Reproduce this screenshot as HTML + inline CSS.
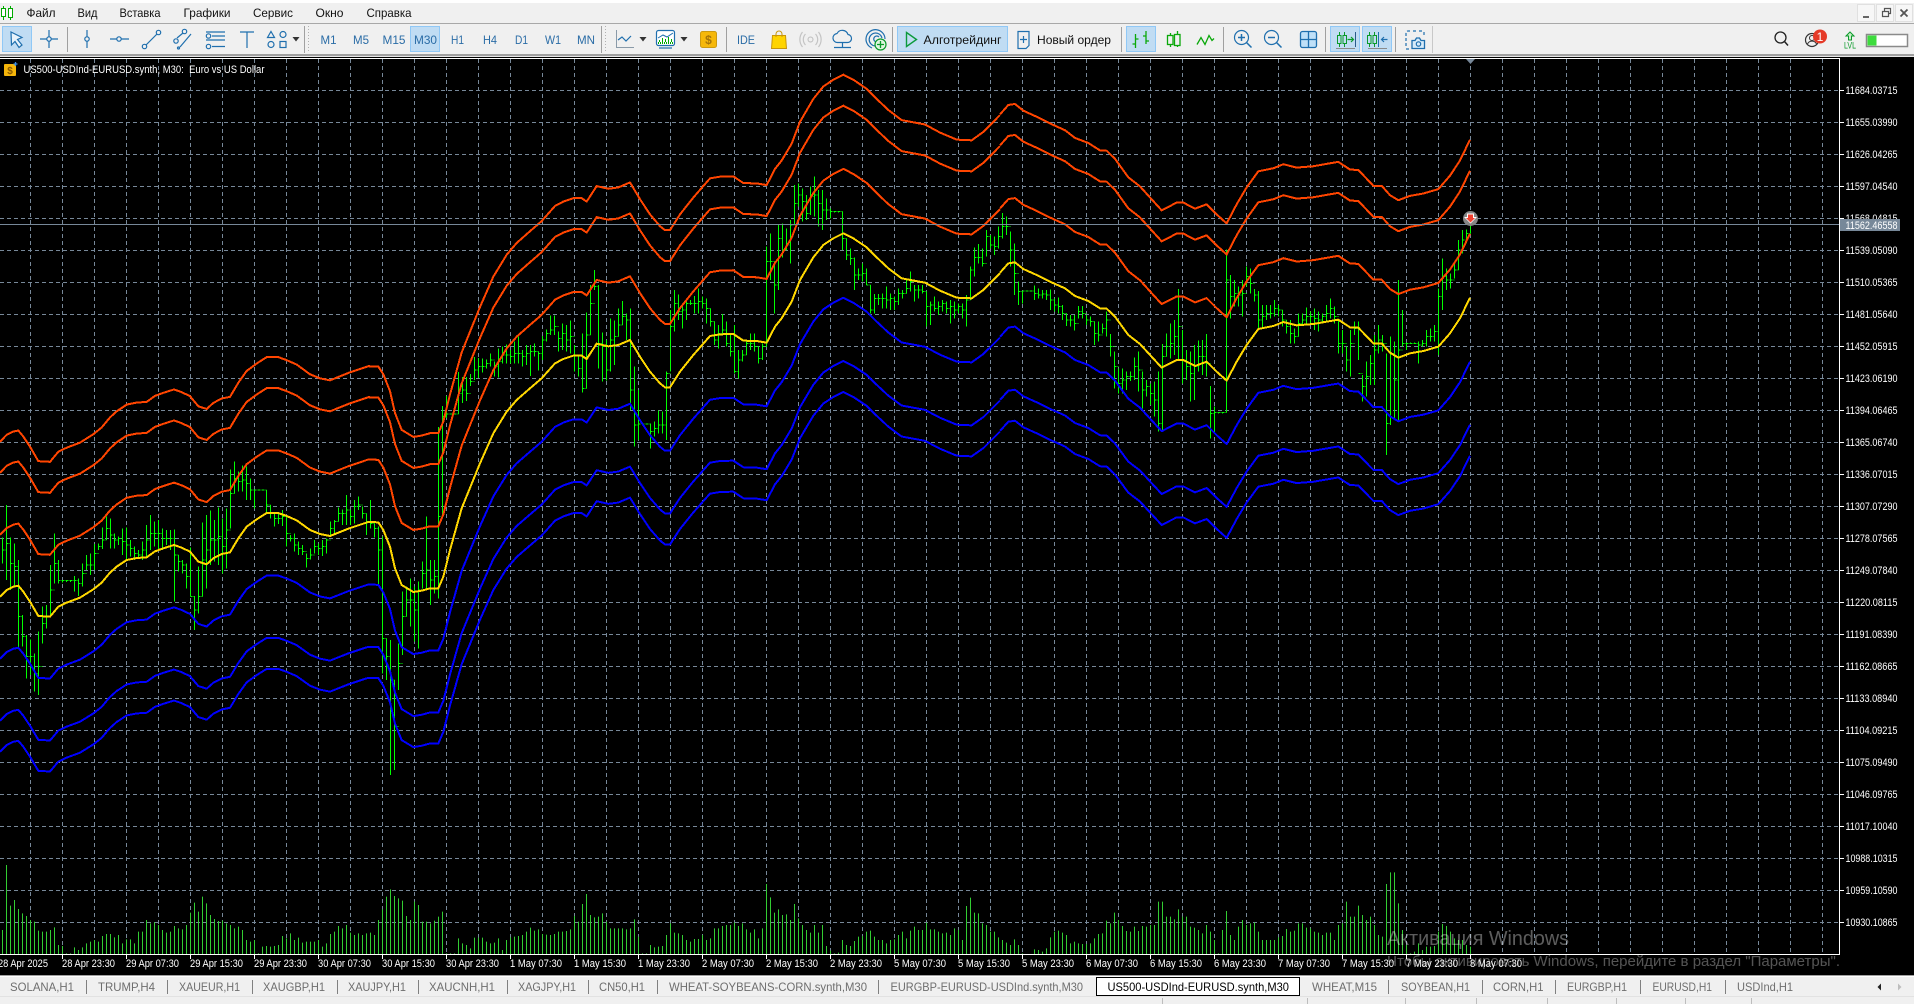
<!DOCTYPE html>
<html lang="ru"><head><meta charset="utf-8"><title>US500-USDInd-EURUSD.synth,M30</title>
<style>
html,body{margin:0;padding:0;width:1914px;height:1004px;overflow:hidden;background:#f0f0f0}
svg{display:block}
text{font-family:"Liberation Sans",Arial,sans-serif}
.m{font-size:12px;fill:#111}
.t{font-size:12px;fill:#2a6ca6}
.k{font-size:12px;fill:#111}
.p{font-size:11px;fill:#fff}
.d{font-size:11px;fill:#fff}
.b{font-size:12px;fill:#6e6e6e}
.i{fill:none;stroke:#1f6fae;stroke-width:1.2}
.g{fill:none;stroke:#0aa80a;stroke-width:1.3}
</style></head><body>
<svg width="1914" height="1004" viewBox="0 0 1914 1004" xmlns="http://www.w3.org/2000/svg">
<rect width="1914" height="1004" fill="#f0f0f0"/>
<rect width="1914" height="3" fill="#fff"/>
<rect y="23" width="1914" height="1" fill="#a8a8a8"/>
<!-- logo -->
<path d="M3.5 6V20M10.5 6V20" stroke="#0a0" fill="none"/>
<rect x="1.5" y="8.5" width="4" height="8" fill="#fff" stroke="#0a0"/>
<rect x="8.5" y="8.5" width="4" height="9" fill="#fff" stroke="#0a0"/>
<!-- menu -->
<g class="m">
<text class="m" x="26.5" y="17" textLength="29" lengthAdjust="spacingAndGlyphs">Файл</text>
<text class="m" x="77.5" y="17" textLength="20" lengthAdjust="spacingAndGlyphs">Вид</text>
<text class="m" x="119.5" y="17" textLength="41" lengthAdjust="spacingAndGlyphs">Вставка</text>
<text class="m" x="183.5" y="17" textLength="47" lengthAdjust="spacingAndGlyphs">Графики</text>
<text class="m" x="253" y="17" textLength="40" lengthAdjust="spacingAndGlyphs">Сервис</text>
<text class="m" x="315.5" y="17" textLength="28" lengthAdjust="spacingAndGlyphs">Окно</text>
<text class="m" x="366.5" y="17" textLength="45" lengthAdjust="spacingAndGlyphs">Справка</text>
</g>
<!-- window controls -->
<g fill="#f7f7f7" stroke="#e0e0e0"><rect x="1857.5" y="4.5" width="17" height="17"/><rect x="1876.5" y="4.5" width="17" height="17"/><rect x="1895.5" y="4.5" width="17" height="17"/></g>
<path d="M1863 17h6" stroke="#666" stroke-width="2"/>
<path d="M1882.5 11.5h6v5h-6zM1884.5 11v-2.500h6v5h-2" fill="none" stroke="#555" stroke-width="1.200"/>
<path d="M1900.500 9.500l7 7M1907.500 9.500l-7 7" stroke="#555" stroke-width="1.800"/>
<!-- toolbar buttons -->
<g fill="#c0dcf3" stroke="#90c8f6">
<rect x="2.500" y="26.500" width="29" height="25"/>
<rect x="410.500" y="26.500" width="29" height="25"/>
<rect x="897.500" y="26.500" width="110" height="25"/>
<rect x="1126.500" y="26.500" width="29" height="25"/>
<rect x="1330.500" y="26.500" width="29" height="25"/>
<rect x="1362.500" y="26.500" width="29" height="25"/>
</g>
<!-- separators -->
<path d="M67.500 27V52M304.500 26V53M601.500 26V53M726.500 27V52M892.500 27V52M1121.500 27V52M1223.500 27V52M1325.500 27V52M1395.500 27V52" stroke="#a0a0a0"/>
<path d="M1432.500 26V53" stroke="#c8c8c8"/>
<path d="M308.500 26V53M605.500 26V53" stroke="#b0b0b0" stroke-dasharray="1 2"/>
<rect y="54" width="1914" height="2" fill="#a0a0a0"/>
<rect y="56" width="1914" height="1" fill="#e8e8e8"/>
<!-- drawing tools -->
<path d="M11 32l11 5.500-4.500 2 4.500 5.500-3 2.500-4-6-3.500 3.500z" fill="#e8f3fb" stroke="#1f6fae" stroke-width="1.200"/>
<path class="i" d="M40 39h7M51 39h7M49 30v7M49 41v7"/><circle class="i" cx="49" cy="39" r="2.200"/>
<path class="i" d="M87 30v7M87 41v7"/><circle class="i" cx="87" cy="39" r="2.200"/>
<path class="i" d="M110 39h7M121 39h8"/><circle class="i" cx="119" cy="39" r="2.200"/>
<path class="i" d="M146 45l11-11"/><circle class="i" cx="144.500" cy="46.500" r="2.200"/><circle class="i" cx="158.500" cy="32.500" r="2.200"/>
<path class="i" d="M177 38l6-5M180 47l11-13"/><circle class="i" cx="176" cy="41" r="2.200"/><circle class="i" cx="184.500" cy="31.500" r="2.200"/><circle class="i" cx="178.500" cy="48" r="1"/>
<path class="i" d="M206 32h19M212 36h13M206 40h19M212 46.500h13"/><circle class="i" cx="208.500" cy="36" r="2.200"/><circle class="i" cx="208.500" cy="46.500" r="2.200"/>
<path class="i" d="M240 32h14M247 32v16"/>
<path class="i" d="M271 31.500l3.500 6h-7z"/><circle class="i" cx="283" cy="34.500" r="3"/><circle class="i" cx="271" cy="44.500" r="3"/><rect class="i" x="280" y="41.500" width="6" height="6"/>
<path d="M292.500 37h7l-3.500 4.500z" fill="#333"/>
<!-- timeframes -->
<g>
<text class="t" x="320.500" y="44" textLength="16" lengthAdjust="spacingAndGlyphs">M1</text>
<text class="t" x="353" y="44" textLength="16" lengthAdjust="spacingAndGlyphs">M5</text>
<text class="t" x="382.500" y="44" textLength="23" lengthAdjust="spacingAndGlyphs">M15</text>
<text class="t" x="414" y="44" textLength="23" lengthAdjust="spacingAndGlyphs">M30</text>
<text class="t" x="451" y="44" textLength="13" lengthAdjust="spacingAndGlyphs">H1</text>
<text class="t" x="483" y="44" textLength="14" lengthAdjust="spacingAndGlyphs">H4</text>
<text class="t" x="515" y="44" textLength="13" lengthAdjust="spacingAndGlyphs">D1</text>
<text class="t" x="545" y="44" textLength="16" lengthAdjust="spacingAndGlyphs">W1</text>
<text class="t" x="577" y="44" textLength="18" lengthAdjust="spacingAndGlyphs">MN</text>
</g>
<!-- chart types -->
<path d="M616.500 30V47.500H634" fill="none" stroke="#8a9aa8"/><path class="i" d="M618 40l4-3 4 4 5-5"/>
<path d="M639.500 37h7l-3.500 4.500z" fill="#333"/>
<rect class="i" x="656.500" y="30.500" width="18" height="15" rx="2" fill="#fff" style="fill:#fff"/>
<path d="M658 43h15" stroke="#0a0" stroke-dasharray="1 1" stroke-width="2"/><path d="M659.500 42v-2M662.500 42v-4M665.500 42v-3M668.500 42v-5M671.500 42v-3" stroke="#0a0"/>
<path d="M658 38l5-3 4 2 6-4" fill="none" stroke="#1f6fae"/><path class="i" d="M659 48h13"/>
<path d="M680.500 37h7l-3.500 4.500z" fill="#333"/>
<rect x="700.500" y="31.500" width="16" height="16" rx="2" fill="#f6b80a" stroke="#cc9a10"/>
<text x="708.500" y="44" text-anchor="middle" font-size="12" font-weight="bold" fill="#a5740a">$</text>
<text class="t" x="737" y="44" textLength="18" lengthAdjust="spacingAndGlyphs">IDE</text>
<path d="M772.500 35.500h13l1 13h-15z" fill="#ffd400" stroke="#c8960a"/><path d="M776 37v-3a3 3 0 0 1 6 0v3" fill="none" stroke="#c8960a"/>
<circle cx="810.500" cy="39.500" r="2.500" fill="none" stroke="#bdbdbd"/>
<path d="M805.500 34a8 8 0 0 0 0 11M802.500 32a12 12 0 0 0 0 15M815.500 34a8 8 0 0 1 0 11M818.500 32a12 12 0 0 1 0 15" fill="none" stroke="#c4c4c4" stroke-width="1.200"/>
<path class="i" d="M838 42.500h9a4 4 0 0 0 1-8 6 6 0 0 0-11-1 4.500 4.500 0 0 0 1 9zM842.500 42.500V47M834 47.500h17"/>
<path class="i" d="M872 48a9.500 9.500 0 1 1 13-9M875 46a6.500 6.500 0 1 1 7-8M877 42a3 3 0 1 1 2-5"/>
<circle cx="880.500" cy="44.500" r="5.500" fill="#dff5df" stroke="#0a9a2a" stroke-width="1.200"/><path d="M880.500 41v7M877 44.500h7" stroke="#0a9a2a" stroke-width="1.300"/>
<!-- Algo / order -->
<path d="M906.500 32.500l10 7-10 7z" fill="none" stroke="#0c9a3c" stroke-width="1.400"/>
<text class="k" x="923.500" y="44" textLength="78" lengthAdjust="spacingAndGlyphs">Алготрейдинг</text>
<path class="i" d="M1018 31.500h11v14l-3 3h-8zM1020 48.500h6" /><path d="M1023.500 36v7M1020 39.500h7" stroke="#1f6fae" stroke-width="1.200"/>
<text class="k" x="1037" y="44" textLength="74" lengthAdjust="spacingAndGlyphs">Новый ордер</text>
<!-- chart icons -->
<path class="g" d="M1135.500 34v14M1132.500 44h3M1135.500 39h3M1146 31v13M1143 36h3M1146 41h3"/>
<path class="g" d="M1170.500 33v14M1177.500 31v16"/><rect class="g" x="1167.500" y="35.500" width="5.500" height="9" fill="#f0f0f0" style="fill:#f0f0f0"/><rect class="g" x="1174.500" y="34.500" width="5.500" height="11" fill="#f0f0f0" style="fill:#f0f0f0"/>
<path class="g" d="M1197 44.500l4-7 4 7 4-9 3 5 2-2"/>
<circle class="i" cx="1241.500" cy="37.500" r="7"/><path class="i" d="M1246.500 42.500l5 5M1241.500 34v7M1238 37.500h7" style="stroke-width:1.500"/>
<circle class="i" cx="1271.500" cy="37.500" r="7"/><path class="i" d="M1276.500 42.500l5 5M1268 37.500h7" style="stroke-width:1.500"/>
<rect x="1300.500" y="31.500" width="16" height="16" rx="2" fill="#bfe0f8" stroke="#1f6fae" stroke-width="1.300"/><path d="M1308.500 31v16M1300 39.500h16" stroke="#1f6fae" stroke-width="1.300"/>
<path d="M1336 48.500h19M1368 48.500h19" stroke="#8a8a8a" stroke-width="1"/>
<path d="M1339.500 32v15M1344.500 32v15M1369.500 32v15M1374.500 32v15" stroke="#0a9a2a"/>
<rect x="1337.500" y="35.500" width="3.500" height="8" fill="#c0dcf3" stroke="#0a9a2a"/><rect x="1343" y="35.500" width="3.500" height="8" fill="#c0dcf3" stroke="#0a9a2a"/>
<rect x="1367.500" y="35.500" width="3.500" height="8" fill="#c0dcf3" stroke="#0a9a2a"/><rect x="1373" y="35.500" width="3.500" height="8" fill="#c0dcf3" stroke="#0a9a2a"/>
<path d="M1347.500 39.500h6M1351 37l2.500 2.500-2.500 2.500" fill="none" stroke="#0a9a2a" stroke-width="1.200"/>
<path d="M1355.500 32v15" stroke="#2a5a8a"/><path d="M1378.500 32v15" stroke="#1f6fae"/>
<path d="M1381.500 39.500h6M1384 37l-2.500 2.500 2.500 2.500" fill="none" stroke="#1f6fae" stroke-width="1.200"/>
<path class="i" d="M1410 31h-2a2 2 0 0 0-2 2v14M1413 31h3M1419 31h3M1424 32v3M1406 49h3" stroke-dasharray="3 2"/>
<path d="M1412 40.500h3l1.500-2.500h3l1.500 2.500h3.500v8h-12.500z" fill="#d7ebf9" stroke="#1f6fae" stroke-width="1.300"/><circle class="i" cx="1418.500" cy="44" r="2.200"/>
<!-- right of toolbar -->
<circle cx="1780.500" cy="37.500" r="5.500" fill="none" stroke="#222" stroke-width="1.300"/><path d="M1784.500 41.500l3.500 4" stroke="#222" stroke-width="1.500"/>
<circle cx="1812" cy="40" r="6.500" fill="#f0f0f0" stroke="#333" stroke-width="1.200"/><circle cx="1812" cy="38" r="2.500" fill="none" stroke="#333"/><path d="M1807.500 44a5 5 0 0 1 9 0" fill="none" stroke="#333"/>
<circle cx="1820" cy="36.500" r="7" fill="#e53a28"/><text x="1820" y="41" text-anchor="middle" font-size="12" fill="#fff">1</text>
<path d="M1850 32l4 4h-2.500v4h-3v-4H1846z" fill="#c8f0c8" stroke="#0a9a2a"/>
<text x="1844" y="48.500" font-size="9" fill="#0a9a2a" textLength="12" lengthAdjust="spacingAndGlyphs">LVL</text>
<rect x="1866.500" y="34.500" width="41" height="12" fill="#fff" stroke="#8a8a8a" stroke-width="1.500"/><rect x="1867.500" y="35.500" width="9" height="10" fill="#3ddc3d"/>
<!-- chart -->
<rect y="57" width="1914" height="919" fill="#000"/>
<!-- grid -->
<path fill="none" stroke="#778899" stroke-dasharray="4 3" d="M0 90.500H1839M0 122.500H1839M0 154.500H1839M0 186.500H1839M0 218.500H1839M0 250.500H1839M0 282.500H1839M0 314.500H1839M0 346.500H1839M0 378.500H1839M0 410.500H1839M0 442.500H1839M0 474.500H1839M0 506.500H1839M0 538.500H1839M0 570.500H1839M0 602.500H1839M0 634.500H1839M0 666.500H1839M0 698.500H1839M0 730.500H1839M0 762.500H1839M0 794.500H1839M0 826.500H1839M0 858.500H1839M0 890.500H1839M0 922.500H1839"/>
<path fill="none" stroke="#778899" stroke-dasharray="4 3" d="M30.500 59V954M62.500 59V954M94.500 59V954M126.500 59V954M158.500 59V954M190.500 59V954M222.500 59V954M254.500 59V954M286.500 59V954M318.500 59V954M350.500 59V954M382.500 59V954M414.500 59V954M446.500 59V954M478.500 59V954M510.500 59V954M542.500 59V954M574.500 59V954M606.500 59V954M638.500 59V954M670.500 59V954M702.500 59V954M734.500 59V954M766.500 59V954M798.500 59V954M830.500 59V954M862.500 59V954M894.500 59V954M926.500 59V954M958.500 59V954M990.500 59V954M1022.500 59V954M1054.500 59V954M1086.500 59V954M1118.500 59V954M1150.500 59V954M1182.500 59V954M1214.500 59V954M1246.500 59V954M1278.500 59V954M1310.500 59V954M1342.500 59V954M1374.500 59V954M1406.500 59V954M1438.500 59V954M1470.500 59V954M1502.500 59V954M1534.500 59V954M1566.500 59V954M1598.500 59V954M1630.500 59V954M1662.500 59V954M1694.500 59V954M1726.500 59V954M1758.500 59V954M1790.500 59V954M1822.500 59V954"/>
<!-- volumes -->
<g transform="translate(.5 860) scale(1 .33333)"><path fill="none" stroke="#32cd32" shape-rendering="crispEdges" d="M2 210V282M6 15V282M10 137V282M14 120V282M18 147V282M22 160V282M26 168V282M30 180V282M34 185V282M38 212V282M42 215V282M46 215V282M50 210V282M54 202V282M58 255V282M62 258V282M66 280V282M70 280V282M74 262V282M78 270V282M82 262V282M86 250V282M90 245V282M94 240V282M98 245V282M102 228V282M106 222V282M110 222V282M114 232V282M118 225V282M122 250V282M126 238V282M130 238V282M134 250V282M138 215V282M142 215V282M146 180V282M150 190V282M154 187V282M158 195V282M162 210V282M166 218V282M170 215V282M174 198V282M178 205V282M182 208V282M186 195V282M190 158V282M194 128V282M198 155V282M202 110V282M206 130V282M210 165V282M214 177V282M218 183V282M222 182V282M226 190V282M230 195V282M234 205V282M238 200V282M242 210V282M246 240V282M250 245V282M254 240V282M258 280V282M262 260V282M266 258V282M270 260V282M274 258V282M278 255V282M282 228V282M286 235V282M290 220V282M294 240V282M298 233V282M302 248V282M306 245V282M310 245V282M314 245V282M318 240V282M322 260V282M326 250V282M330 222V282M334 215V282M338 198V282M342 205V282M346 195V282M350 218V282M354 225V282M358 220V282M362 225V282M366 220V282M370 218V282M374 225V282M378 180V282M382 148V282M386 110V282M390 88V282M394 108V282M398 115V282M402 122V282M406 168V282M410 180V282M414 125V282M418 135V282M422 185V282M426 185V282M430 190V282M434 182V282M438 170V282M442 155V282M446 280V282M450 280V282M454 280V282M458 235V282M462 250V282M466 255V282M470 265V282M474 233V282M478 233V282M482 233V282M486 245V282M490 250V282M494 248V282M498 235V282M502 270V282M506 240V282M510 232V282M514 230V282M518 228V282M522 225V282M526 215V282M530 203V282M534 212V282M538 208V282M542 222V282M546 224V282M550 225V282M554 222V282M558 215V282M562 215V282M566 213V282M570 208V282M574 168V282M578 185V282M582 132V282M586 102V282M590 165V282M594 172V282M598 170V282M602 160V282M606 185V282M610 205V282M614 205V282M618 205V282M622 205V282M626 208V282M630 205V282M634 178V282M638 230V282M642 280V282M646 280V282M650 255V282M654 262V282M658 260V282M662 258V282M666 225V282M670 190V282M674 218V282M678 220V282M682 225V282M686 240V282M690 245V282M694 237V282M698 237V282M702 225V282M706 240V282M710 235V282M714 205V282M718 205V282M722 198V282M726 195V282M730 195V282M734 188V282M738 198V282M742 190V282M746 208V282M750 218V282M754 208V282M758 235V282M762 205V282M766 72V282M770 112V282M774 158V282M778 148V282M782 165V282M786 163V282M790 180V282M794 132V282M798 175V282M802 195V282M806 210V282M810 218V282M814 195V282M818 218V282M822 195V282M826 258V282M830 272V282M834 280V282M838 278V282M842 240V282M846 255V282M850 258V282M854 243V282M858 230V282M862 228V282M866 215V282M870 212V282M874 230V282M878 240V282M882 240V282M886 250V282M890 240V282M894 238V282M898 225V282M902 215V282M906 235V282M910 212V282M914 200V282M918 210V282M922 210V282M926 188V282M930 208V282M934 208V282M938 215V282M942 220V282M946 218V282M950 225V282M954 205V282M958 210V282M962 240V282M966 138V282M970 113V282M974 158V282M978 160V282M982 190V282M986 195V282M990 215V282M994 215V282M998 232V282M1002 240V282M1006 248V282M1010 255V282M1014 238V282M1018 255V282M1022 280V282M1026 282V282M1030 282V282M1034 268V282M1038 270V282M1042 275V282M1046 265V282M1050 232V282M1054 215V282M1058 212V282M1062 218V282M1066 225V282M1070 250V282M1074 245V282M1078 250V282M1082 252V282M1086 252V282M1090 250V282M1094 235V282M1098 222V282M1102 220V282M1106 182V282M1110 190V282M1114 158V282M1118 180V282M1122 198V282M1126 213V282M1130 215V282M1134 200V282M1138 213V282M1142 198V282M1146 200V282M1150 195V282M1154 195V282M1158 125V282M1162 125V282M1166 170V282M1170 170V282M1174 178V282M1178 148V282M1182 170V282M1186 170V282M1190 200V282M1194 203V282M1198 210V282M1202 220V282M1206 195V282M1210 215V282M1214 240V282M1218 280V282M1222 210V282M1226 153V282M1230 225V282M1234 240V282M1238 200V282M1242 180V282M1246 195V282M1250 190V282M1254 188V282M1258 215V282M1262 240V282M1266 240V282M1270 240V282M1274 240V282M1278 232V282M1282 228V282M1286 207V282M1290 215V282M1294 212V282M1298 190V282M1302 190V282M1306 203V282M1310 205V282M1314 215V282M1318 218V282M1322 225V282M1326 218V282M1330 218V282M1334 240V282M1338 195V282M1342 190V282M1346 125V282M1350 170V282M1354 170V282M1358 137V282M1362 165V282M1366 180V282M1370 170V282M1374 195V282M1378 225V282M1382 230V282M1386 72V282M1390 37V282M1394 37V282M1398 130V282M1402 210V282M1406 255V282M1410 280V282M1414 275V282M1418 250V282M1422 270V282M1426 260V282M1430 260V282M1434 258V282M1438 215V282M1442 192V282M1446 198V282M1450 215V282M1454 235V282M1458 240V282M1462 240V282M1466 255V282M1470 260V282"/></g>
<!-- price bars -->
<g fill="none" stroke="#00ff00" stroke-width="3" shape-rendering="crispEdges">
<g transform="translate(.5 450) scale(.33333)">
<path d="M6 262V340M18 165V390M30 262V420M42 280V410M54 330V595M66 495V590M78 555V685M90 568V675M102 610V725M114 545V735M126 470V580M138 465V535M150 345V500M162 250V400M174 330V400M186 390V398M198 390V396M210 390V396M222 378V425M234 385V438M246 340V410M258 315V360M270 310V375M282 282V360M294 280V300M306 232V297M318 200V270M330 205V295M342 250V295M354 260V285M366 235V315M378 232V330M390 270V320M402 290V330M414 300V325M426 275V330M438 225V325M450 195V300M462 215V290M474 210V300M486 235V300M498 240V285M510 240V300M522 238V455M534 315V365M546 330V370M558 340V415M570 292V440M582 438V540M594 350V490M606 218V440M618 195V415M630 182V345M642 210V335M654 172V345M666 205V370M678 175V355M690 58V235M702 35V130M714 65V125M726 47V125M738 50V150M750 85V150M762 120V175M774 118V122M786 118V122M798 120V188M810 165V205M822 190V230M834 190V222M846 180V228M858 195V290M870 255V275M882 250V305M894 275V315M906 285V315M918 310V352M930 295V328M942 270V310M954 280V315M966 270V318M978 265V310M990 215V260M1002 210V255M1014 172V215M1026 178V225M1038 135V225M1050 180V225M1062 150V220M1074 140V180M1086 170V205M1098 190V255M1110 150V235M1122 220V262M1134 230V405M1146 260V670M1158 565V690M1170 570V975M1182 690V960M1194 580V720M1206 425V615M1218 410V500M1230 385V530M1242 410V575M1254 395V595M1266 335V415M1278 200V420M1290 330V465M1302 330V430M1314 -69V445M1326 -132V200M1338 -162V-96M1350 -110V-106M1362 -110V-106M1374 -234V-108M1386 -219V-141M1398 -219V-147M1410 -228V-192M1422 -279V-210M1434 -276V-216"/>
<path stroke-dasharray="6 3 3" d="M6 300h12M18 280h12M30 340h12M42 350h12M54 500h12M66 560h12M78 620h12M90 620h12M102 670h12M114 650h12M126 520h12M138 500h12M150 420h12M162 340h12M174 392h12M186 392h12M198 392h12M210 392h12M222 392h12M234 400h12M246 370h12M258 345h12M270 345h12M282 310h12M294 290h12M306 270h12M318 235h12M330 255h12M342 270h12M354 265h12M366 275h12M378 285h12M390 295h12M402 310h12M414 315h12M426 300h12M438 270h12M450 250h12M462 250h12M474 250h12M486 265h12M498 265h12M510 265h12M522 315h12M534 335h12M546 345h12M558 380h12M570 440h12M582 480h12M594 440h12M606 330h12M618 300h12M630 270h12M642 270h12M654 260h12M666 290h12M678 240h12M690 130h12M702 85h12M714 95h12M726 90h12M738 100h12M750 120h12M762 120h12M774 120h12M786 120h12M798 165h12M810 190h12M822 205h12M834 205h12M846 200h12M858 250h12M870 265h12M882 285h12M894 295h12M906 305h12M918 325h12M930 315h12M942 290h12M954 295h12M966 290h12M978 270h12M990 235h12M1002 215h12M1014 190h12M1026 190h12M1038 180h12M1050 200h12M1062 170h12M1074 165h12M1086 190h12M1098 215h12M1110 220h12M1122 235h12M1134 300h12M1146 565h12M1158 620h12M1170 690h12M1182 830h12M1194 640h12M1206 500h12M1218 450h12M1230 450h12M1242 480h12M1254 420h12M1266 370h12M1278 360h12M1290 390h12M1302 380h12M1314 200h12M1326 -100h12M1338 -108h12M1350 -108h12M1362 -108h12M1374 -170h12M1386 -180h12M1398 -170h12M1410 -205h12M1422 -240h12M1434 -250h12"/>
</g>
<g transform="translate(480.500 170) scale(.33333)">
<path d="M6 565V608M18 568V595M30 550V590M42 575V620M54 535V622M66 530V580M78 523V580M90 540V580M102 515V580M114 500V580M126 540V590M138 525V585M150 525V618M162 520V560M174 545V602M186 498V570M198 478V515M210 437V495M222 437V495M234 485V545M246 460V540M258 465V545M270 452V550M282 525V605M294 555V620M306 490V668M318 428V655M330 345V495M342 300V360M354 345V595M366 487V635M378 510V632M390 445V605M402 452V585M414 415V500M426 393V465M438 430V510M450 415V720M462 590V830M474 660V810M486 760V764M498 760V764M510 760V835M522 755V800M534 722V790M546 725V790M558 605V810M570 420V605M582 360V485M594 373V450M606 408V475M618 395V450M630 390V405M642 378V430M654 355V430M666 380V415M678 385V460M690 415V470M702 455V525M714 465V535M726 432V495M738 455V530M750 490V560M762 465V610M774 540V625M786 540V575M798 510V555M810 490V540M822 490V545M834 530V580M846 520V570M858 230V530M870 190V330M882 275V430M894 165V360M906 160V262M918 175V240M930 150V280M942 45V165M954 40V110M966 55V155M978 75V150M990 50V135M1002 20V140M1014 60V170M1026 60V180M1038 85V150M1050 115V145M1062 123V127M1074 123V127M1086 125V240M1098 205V270M1110 235V285M1122 262V360M1134 295V330M1146 280V335M1158 295V345M1170 345V430M1182 372V430M1194 372V405M1206 370V415M1218 350V415M1230 370V420M1242 380V420M1254 355V405M1266 360V385M1278 330V370M1290 305V365M1302 345V395M1314 345V385M1326 345V370M1338 365V470M1350 395V465M1362 380V425M1374 395V435M1386 390V425M1398 395V430M1410 390V460M1422 395V445M1434 400V430M1446 400V445M1458 375V470M1470 290V390M1482 232V320M1494 222V280M1506 235V290M1518 180V260M1530 195V235M1542 200V255M1554 170V235"/>
<path stroke-dasharray="6 3 3" d="M6 590h12M18 580h12M30 570h12M42 590h12M54 575h12M66 555h12M78 555h12M90 560h12M102 550h12M114 550h12M126 560h12M138 550h12M150 545h12M162 545h12M174 550h12M186 510h12M198 490h12M210 480h12M222 470h12M234 505h12M246 490h12M258 510h12M270 500h12M282 555h12M294 595h12M306 655h12M318 495h12M330 400h12M342 350h12M354 520h12M366 530h12M378 600h12M390 510h12M402 500h12M414 465h12M426 440h12M438 450h12M450 660h12M462 765h12M474 762h12M486 762h12M498 762h12M510 785h12M522 775h12M534 765h12M546 765h12M558 610h12M570 470h12M582 400h12M594 425h12M606 420h12M618 400h12M630 400h12M642 400h12M654 395h12M666 400h12M678 415h12M690 455h12M702 510h12M714 490h12M726 480h12M738 520h12M750 545h12M762 605h12M774 570h12M786 555h12M798 520h12M810 520h12M822 530h12M834 565h12M846 530h12M858 275h12M870 275h12M882 345h12M894 205h12M906 240h12M918 225h12M930 165h12M942 100h12M954 75h12M966 95h12M978 130h12M990 80h12M1002 75h12M1014 100h12M1026 120h12M1038 120h12M1050 125h12M1062 125h12M1074 125h12M1086 205h12M1098 255h12M1110 265h12M1122 315h12M1134 315h12M1146 310h12M1158 345h12M1170 420h12M1182 385h12M1194 385h12M1206 385h12M1218 390h12M1230 385h12M1242 395h12M1254 370h12M1266 370h12M1278 355h12M1290 335h12M1302 360h12M1314 360h12M1326 365h12M1338 410h12M1350 405h12M1362 415h12M1374 410h12M1386 400h12M1398 415h12M1410 410h12M1422 420h12M1434 410h12M1446 420h12M1458 390h12M1470 300h12M1482 262h12M1494 262h12M1506 280h12M1518 200h12M1530 225h12M1542 230h12M1554 200h12"/>
</g>
<g transform="translate(1000.500 220) scale(.33333)">
<path d="M6 -21V55M18 -10V45M30 35V140M42 70V225M54 185V255M66 213V250M78 211V215M90 211V215M102 197V240M114 205V235M126 210V235M138 210V240M150 208V270M162 235V275M174 233V280M186 255V300M198 280V318M210 285V320M222 285V332M234 258V295M246 258V295M258 285V315M270 290V320M282 305V375M294 305V365M306 310V340M318 275V350M330 342V410M342 395V505M354 445V520M366 445V520M378 455V510M390 455V483M402 413V480M414 395V515M426 455V565M438 480V530M450 490V555M462 485V590M474 455V635M486 372V635M498 340V410M510 310V415M522 300V405M534 207V420M546 330V490M558 390V480M570 395V545M582 375V540M594 362V455M606 360V465M618 342V470M630 498V655M642 560V640M654 576V580M666 576V580M678 88V578M690 165V295M702 180V260M714 200V260M726 180V290M738 140V200M750 145V220M762 207V245M774 213V325M786 255V325M798 255V300M810 255V295M822 240V290M834 255V290M846 270V320M858 300V340M870 300V370M882 325V370M894 280V350M906 280V315M918 262V315M930 275V315M942 265V330M954 275V335M966 280V305M978 255V305M990 235V295M1002 260V310M1014 300V400M1026 330V400M1038 380V455M1050 330V470M1062 305V345M1074 305V420M1086 465V545M1098 425V530M1110 405V495M1122 345V495M1134 315V400M1146 345V395M1158 400V705M1170 350V615M1182 365V600M1194 180V600M1206 270V380M1218 368V390M1230 368V372M1242 368V372M1254 365V430M1266 360V380M1278 330V380M1290 325V365M1302 315V365M1314 205V405M1326 115V270M1338 145V210M1350 160V205M1362 130V175M1374 60V150M1386 30V100M1398 28V70M1410 10V40"/>
<path stroke-dasharray="6 3 3" d="M6 20h12M18 20h12M30 90h12M42 160h12M54 215h12M66 213h12M78 213h12M90 213h12M102 220h12M114 225h12M126 222h12M138 225h12M150 240h12M162 255h12M174 260h12M186 280h12M198 300h12M210 300h12M222 310h12M234 275h12M246 280h12M258 300h12M270 305h12M282 340h12M294 345h12M306 325h12M318 300h12M330 380h12M342 440h12M354 490h12M366 480h12M378 470h12M390 470h12M402 440h12M414 450h12M426 510h12M438 500h12M450 520h12M462 540h12M474 610h12M486 410h12M498 380h12M510 370h12M522 350h12M534 320h12M546 420h12M558 440h12M570 460h12M582 440h12M594 410h12M606 410h12M618 430h12M630 580h12M642 578h12M654 578h12M666 578h12M678 180h12M690 230h12M702 220h12M714 225h12M726 220h12M738 170h12M750 190h12M762 225h12M774 300h12M786 290h12M798 280h12M810 280h12M822 265h12M834 270h12M846 300h12M858 320h12M870 340h12M882 350h12M894 310h12M906 300h12M918 290h12M930 290h12M942 295h12M954 300h12M966 290h12M978 280h12M990 265h12M1002 290h12M1014 370h12M1026 370h12M1038 420h12M1050 370h12M1062 325h12M1074 460h12M1086 500h12M1098 470h12M1110 430h12M1122 390h12M1134 360h12M1146 370h12M1158 610h12M1170 400h12M1182 480h12M1194 390h12M1206 370h12M1218 370h12M1230 370h12M1242 370h12M1254 375h12M1266 370h12M1278 350h12M1290 350h12M1302 335h12M1314 230h12M1326 170h12M1338 180h12M1350 180h12M1362 150h12M1374 90h12M1386 60h12M1398 40h12"/>
</g>
</g>
<!-- moving average envelope -->
<defs><g id="ma" fill="none" stroke-width="6" stroke-linejoin="round">
<polyline transform="translate(0 450) scale(.33333)" points="0,440 20,420 40,410 55,407 70,425 90,455 115,498 150,500 175,470 200,458 240,443 280,418 305,398 330,368 350,350 380,330 410,324 440,322 465,304 490,295 522,285 545,293 570,305 595,335 620,343 640,325 665,312 690,307 715,265 740,230 770,208 800,189 835,189 860,198 890,211 930,240 960,252 990,258 1015,248 1045,236 1075,226 1105,216 1135,217 1150,240 1170,290 1185,355 1205,405 1240,426 1265,422 1290,415 1315,415 1330,380 1350,300 1385,175 1440,40"/>
<polyline transform="translate(480 170) scale(.33333)" points="0,880 40,790 80,725 110,690 150,655 185,625 225,580 250,567 280,557 305,557 320,567 350,521 385,529 415,525 450,510 480,560 510,605 540,640 555,652 570,652 600,605 640,555 690,498 720,493 760,492 790,512 830,513 860,518 885,470 905,445 935,395 960,330 1000,262 1030,225 1060,205 1090,190 1120,205 1160,232 1190,262 1225,295 1265,325 1335,338 1380,362 1430,383 1475,385 1510,360 1560,310"/>
<polyline transform="translate(1000 220) scale(.33333)" points="0,158 25,130 45,127 70,147 110,165 150,185 195,205 225,228 265,243 300,265 320,266 345,290 385,345 420,372 485,443 530,420 550,420 585,438 620,425 650,455 680,482 710,425 740,375 775,327 820,318 850,306 890,316 940,312 980,305 1015,299 1050,322 1075,323 1120,370 1145,370 1170,398 1195,413 1230,400 1270,393 1315,380 1350,340 1380,295 1410,233"/>
</g></defs>
<g shape-rendering="crispEdges">
<use href="#ma" transform="matrix(1 0 0 1.01 0 -161)" stroke="#ff4500"/>
<use href="#ma" transform="matrix(1 0 0 1.01 0 -130)" stroke="#ff4500"/>
<use href="#ma" transform="matrix(1 0 0 1.0067 0 -66)" stroke="#ff4500"/>
<use href="#ma" transform="matrix(1 0 0 .9933 0 66)" stroke="#0000ff"/>
<use href="#ma" transform="matrix(1 0 0 .99 0 130)" stroke="#0000ff"/>
<use href="#ma" transform="matrix(1 0 0 .99 0 161)" stroke="#0000ff"/>
<use href="#ma" stroke="#ffd700"/>
</g>
<!-- bid line -->
<path d="M0 224.500H1839" stroke="#778899"/>
<!-- frame -->
<path d="M0 58.500H1839.500V954.500H0" fill="none" stroke="#fff"/>
<path d="M1466 59h9l-4.500 5z" fill="#778899"/>
<!-- arrow mark -->
<circle cx="1470.500" cy="218.500" r="7.500" fill="#858585"/>
<path d="M1467 213.500h7v3.500h3l-6.500 6.500-6.500-6.500h3z" fill="#fff"/>
<path d="M1468 214.500h5v3.500h2l-4.500 4.500-4.500-4.500h2z" fill="#f04030"/>
<!-- chart header -->
<rect x="4" y="64" width="12" height="12" rx="1" fill="#f5b50a"/><text x="10" y="74" text-anchor="middle" font-size="10" font-weight="bold" fill="#8a5a00">$</text>
<path d="M15.500 62v4M13.500 64h4" stroke="#3a8ae0" stroke-width="1.300"/>
<text x="23.500" y="73" font-size="11" fill="#fff" textLength="241" lengthAdjust="spacingAndGlyphs" xml:space="preserve">US500-USDInd-EURUSD.synth, M30:  Euro vs US Dollar</text>
<!-- price axis -->
<path stroke="#fff" d="M1840 90.500h4M1840 122.500h4M1840 154.500h4M1840 186.500h4M1840 218.500h4M1840 250.500h4M1840 282.500h4M1840 314.500h4M1840 346.500h4M1840 378.500h4M1840 410.500h4M1840 442.500h4M1840 474.500h4M1840 506.500h4M1840 538.500h4M1840 570.500h4M1840 602.500h4M1840 634.500h4M1840 666.500h4M1840 698.500h4M1840 730.500h4M1840 762.500h4M1840 794.500h4M1840 826.500h4M1840 858.500h4M1840 890.500h4M1840 922.500h4"/>
<g>
<text class="p" x="1845.500" y="94" textLength="52" lengthAdjust="spacingAndGlyphs">11684.03715</text>
<text class="p" x="1845.500" y="126" textLength="52" lengthAdjust="spacingAndGlyphs">11655.03990</text>
<text class="p" x="1845.500" y="158" textLength="52" lengthAdjust="spacingAndGlyphs">11626.04265</text>
<text class="p" x="1845.500" y="190" textLength="52" lengthAdjust="spacingAndGlyphs">11597.04540</text>
<text class="p" x="1845.500" y="222" textLength="52" lengthAdjust="spacingAndGlyphs">11568.04815</text>
<text class="p" x="1845.500" y="254" textLength="52" lengthAdjust="spacingAndGlyphs">11539.05090</text>
<text class="p" x="1845.500" y="286" textLength="52" lengthAdjust="spacingAndGlyphs">11510.05365</text>
<text class="p" x="1845.500" y="318" textLength="52" lengthAdjust="spacingAndGlyphs">11481.05640</text>
<text class="p" x="1845.500" y="350" textLength="52" lengthAdjust="spacingAndGlyphs">11452.05915</text>
<text class="p" x="1845.500" y="382" textLength="52" lengthAdjust="spacingAndGlyphs">11423.06190</text>
<text class="p" x="1845.500" y="414" textLength="52" lengthAdjust="spacingAndGlyphs">11394.06465</text>
<text class="p" x="1845.500" y="446" textLength="52" lengthAdjust="spacingAndGlyphs">11365.06740</text>
<text class="p" x="1845.500" y="478" textLength="52" lengthAdjust="spacingAndGlyphs">11336.07015</text>
<text class="p" x="1845.500" y="510" textLength="52" lengthAdjust="spacingAndGlyphs">11307.07290</text>
<text class="p" x="1845.500" y="542" textLength="52" lengthAdjust="spacingAndGlyphs">11278.07565</text>
<text class="p" x="1845.500" y="574" textLength="52" lengthAdjust="spacingAndGlyphs">11249.07840</text>
<text class="p" x="1845.500" y="606" textLength="52" lengthAdjust="spacingAndGlyphs">11220.08115</text>
<text class="p" x="1845.500" y="638" textLength="52" lengthAdjust="spacingAndGlyphs">11191.08390</text>
<text class="p" x="1845.500" y="670" textLength="52" lengthAdjust="spacingAndGlyphs">11162.08665</text>
<text class="p" x="1845.500" y="702" textLength="52" lengthAdjust="spacingAndGlyphs">11133.08940</text>
<text class="p" x="1845.500" y="734" textLength="52" lengthAdjust="spacingAndGlyphs">11104.09215</text>
<text class="p" x="1845.500" y="766" textLength="52" lengthAdjust="spacingAndGlyphs">11075.09490</text>
<text class="p" x="1845.500" y="798" textLength="52" lengthAdjust="spacingAndGlyphs">11046.09765</text>
<text class="p" x="1845.500" y="830" textLength="52" lengthAdjust="spacingAndGlyphs">11017.10040</text>
<text class="p" x="1845.500" y="862" textLength="52" lengthAdjust="spacingAndGlyphs">10988.10315</text>
<text class="p" x="1845.500" y="894" textLength="52" lengthAdjust="spacingAndGlyphs">10959.10590</text>
<text class="p" x="1845.500" y="926" textLength="52" lengthAdjust="spacingAndGlyphs">10930.10865</text>
</g>
<rect x="1840" y="219" width="60" height="12" fill="#778899"/>
<text class="p" x="1845.500" y="229" textLength="52" lengthAdjust="spacingAndGlyphs">11562.46558</text>
<!-- time axis -->
<path stroke="#fff" d="M62.500 955v4M126.500 955v4M190.500 955v4M254.500 955v4M318.500 955v4M382.500 955v4M446.500 955v4M510.500 955v4M574.500 955v4M638.500 955v4M702.500 955v4M766.500 955v4M830.500 955v4M894.500 955v4M958.500 955v4M1022.500 955v4M1086.500 955v4M1150.500 955v4M1214.500 955v4M1278.500 955v4M1342.500 955v4M1406.500 955v4M1470.500 955v4"/>
<g>
<text class="d" x="-2" y="967" textLength="50" lengthAdjust="spacingAndGlyphs">28 Apr 2025</text>
<text class="d" x="62" y="967" textLength="53" lengthAdjust="spacingAndGlyphs">28 Apr 23:30</text>
<text class="d" x="126" y="967" textLength="53" lengthAdjust="spacingAndGlyphs">29 Apr 07:30</text>
<text class="d" x="190" y="967" textLength="53" lengthAdjust="spacingAndGlyphs">29 Apr 15:30</text>
<text class="d" x="254" y="967" textLength="53" lengthAdjust="spacingAndGlyphs">29 Apr 23:30</text>
<text class="d" x="318" y="967" textLength="53" lengthAdjust="spacingAndGlyphs">30 Apr 07:30</text>
<text class="d" x="382" y="967" textLength="53" lengthAdjust="spacingAndGlyphs">30 Apr 15:30</text>
<text class="d" x="446" y="967" textLength="53" lengthAdjust="spacingAndGlyphs">30 Apr 23:30</text>
<text class="d" x="510" y="967" textLength="52" lengthAdjust="spacingAndGlyphs">1 May 07:30</text>
<text class="d" x="574" y="967" textLength="52" lengthAdjust="spacingAndGlyphs">1 May 15:30</text>
<text class="d" x="638" y="967" textLength="52" lengthAdjust="spacingAndGlyphs">1 May 23:30</text>
<text class="d" x="702" y="967" textLength="52" lengthAdjust="spacingAndGlyphs">2 May 07:30</text>
<text class="d" x="766" y="967" textLength="52" lengthAdjust="spacingAndGlyphs">2 May 15:30</text>
<text class="d" x="830" y="967" textLength="52" lengthAdjust="spacingAndGlyphs">2 May 23:30</text>
<text class="d" x="894" y="967" textLength="52" lengthAdjust="spacingAndGlyphs">5 May 07:30</text>
<text class="d" x="958" y="967" textLength="52" lengthAdjust="spacingAndGlyphs">5 May 15:30</text>
<text class="d" x="1022" y="967" textLength="52" lengthAdjust="spacingAndGlyphs">5 May 23:30</text>
<text class="d" x="1086" y="967" textLength="52" lengthAdjust="spacingAndGlyphs">6 May 07:30</text>
<text class="d" x="1150" y="967" textLength="52" lengthAdjust="spacingAndGlyphs">6 May 15:30</text>
<text class="d" x="1214" y="967" textLength="52" lengthAdjust="spacingAndGlyphs">6 May 23:30</text>
<text class="d" x="1278" y="967" textLength="52" lengthAdjust="spacingAndGlyphs">7 May 07:30</text>
<text class="d" x="1342" y="967" textLength="52" lengthAdjust="spacingAndGlyphs">7 May 15:30</text>
<text class="d" x="1406" y="967" textLength="52" lengthAdjust="spacingAndGlyphs">7 May 23:30</text>
<text class="d" x="1470" y="967" textLength="52" lengthAdjust="spacingAndGlyphs">8 May 07:30</text>
</g>
<!-- windows watermark -->
<text x="1387" y="945" font-size="20" fill="#fff" opacity=".36" textLength="182" lengthAdjust="spacingAndGlyphs">Активация Windows</text>
<text x="1387" y="966" font-size="14.500" fill="#fff" opacity=".33" textLength="453" lengthAdjust="spacingAndGlyphs">Чтобы активировать Windows, перейдите в раздел "Параметры".</text>
<!-- tab bar -->
<rect y="975" width="1914" height="1" fill="#a0a0a0"/>
<rect y="976" width="1914" height="1" fill="#fff"/>
<rect y="996" width="1914" height="1" fill="#e2e2e2"/>
<path stroke="#808080" d="M86.500 980v14M167.500 980v14M252.500 980v14M337.500 980v14M418.500 980v14M507.500 980v14M588.500 980v14M657.500 980v14M878.500 980v14M1388.500 980v14M1482.500 980v14M1555.500 980v14M1640.500 980v14M1725.500 980v14"/>
<path d="M1096.500 996V977.500H1299.500V996" fill="#fff" stroke="#000"/>
<path d="M1096 995.500h204" stroke="#000"/>
<g>
<text class="b" x="10" y="991" textLength="64" lengthAdjust="spacingAndGlyphs">SOLANA,H1</text>
<text class="b" x="98" y="991" textLength="57" lengthAdjust="spacingAndGlyphs">TRUMP,H4</text>
<text class="b" x="179" y="991" textLength="61" lengthAdjust="spacingAndGlyphs">XAUEUR,H1</text>
<text class="b" x="263" y="991" textLength="62" lengthAdjust="spacingAndGlyphs">XAUGBP,H1</text>
<text class="b" x="348" y="991" textLength="58" lengthAdjust="spacingAndGlyphs">XAUJPY,H1</text>
<text class="b" x="429" y="991" textLength="66" lengthAdjust="spacingAndGlyphs">XAUCNH,H1</text>
<text class="b" x="518" y="991" textLength="58" lengthAdjust="spacingAndGlyphs">XAGJPY,H1</text>
<text class="b" x="599" y="991" textLength="46" lengthAdjust="spacingAndGlyphs">CN50,H1</text>
<text class="b" x="669" y="991" textLength="198" lengthAdjust="spacingAndGlyphs">WHEAT-SOYBEANS-CORN.synth,M30</text>
<text class="b" x="890.500" y="991" textLength="192.500" lengthAdjust="spacingAndGlyphs">EURGBP-EURUSD-USDInd.synth,M30</text>
<text x="1107.500" y="991" font-size="12" fill="#000" textLength="181.500" lengthAdjust="spacingAndGlyphs">US500-USDInd-EURUSD.synth,M30</text>
<text class="b" x="1312" y="991" textLength="65" lengthAdjust="spacingAndGlyphs">WHEAT,M15</text>
<text class="b" x="1401" y="991" textLength="69" lengthAdjust="spacingAndGlyphs">SOYBEAN,H1</text>
<text class="b" x="1493" y="991" textLength="50.500" lengthAdjust="spacingAndGlyphs">CORN,H1</text>
<text class="b" x="1567" y="991" textLength="60" lengthAdjust="spacingAndGlyphs">EURGBP,H1</text>
<text class="b" x="1652.500" y="991" textLength="59.500" lengthAdjust="spacingAndGlyphs">EURUSD,H1</text>
<text class="b" x="1737" y="991" textLength="56" lengthAdjust="spacingAndGlyphs">USDInd,H1</text>
</g>
<path d="M1881 983.500v7l-3.500-3.500z" fill="#222"/>
<path d="M1898 983.500v7l3.500-3.500z" fill="#bdbdbd"/>
<!-- status bar dividers -->
<path stroke="#bdbdbd" d="M1162.500 998v6M1307.500 998v6M1405.500 998v6M1476.500 998v6M1547.500 998v6M1616.500 998v6M1685.500 998v6M1751.500 998v6"/>
</svg>
</body></html>
